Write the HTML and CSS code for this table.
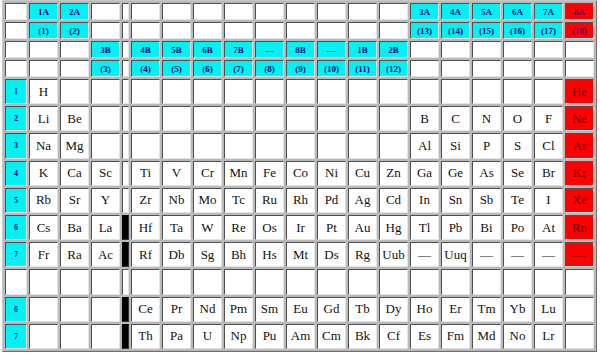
FILE: index.html
```html
<!DOCTYPE html>
<html>
<head>
<meta charset="utf-8">
<link rel="stylesheet" href="styles.css">
</head>
<body>
<table class="pt">
<colgroup>
<col class="wl"><col class="we"><col class="we"><col class="we"><col class="ws">
<col class="we"><col class="we"><col class="we"><col class="we"><col class="we"><col class="we"><col class="we"><col class="we"><col class="we">
<col class="we"><col class="we"><col class="we"><col class="we"><col class="we"><col class="we">
</colgroup>
<tr class="hr">
<td></td><td class="c g">1A</td><td class="c g">2A</td><td></td><td></td>
<td></td><td></td><td></td><td></td><td></td><td></td><td></td><td></td><td></td>
<td class="c g">3A</td><td class="c g">4A</td><td class="c g">5A</td><td class="c g">6A</td><td class="c g">7A</td><td class="r g">8A</td>
</tr>
<tr class="hr">
<td></td><td class="c g">(1)</td><td class="c g">(2)</td><td></td><td></td>
<td></td><td></td><td></td><td></td><td></td><td></td><td></td><td></td><td></td>
<td class="c g">(13)</td><td class="c g">(14)</td><td class="c g">(15)</td><td class="c g">(16)</td><td class="c g">(17)</td><td class="r g">(18)</td>
</tr>
<tr class="hr">
<td></td><td></td><td></td><td class="c g">3B</td><td></td>
<td class="c g">4B</td><td class="c g">5B</td><td class="c g">6B</td><td class="c g">7B</td><td class="c g">—</td><td class="c g">8B</td><td class="c g">—</td><td class="c g">1B</td><td class="c g">2B</td>
<td></td><td></td><td></td><td></td><td></td><td></td>
</tr>
<tr class="hr">
<td></td><td></td><td></td><td class="c g">(3)</td><td></td>
<td class="c g">(4)</td><td class="c g">(5)</td><td class="c g">(6)</td><td class="c g">(7)</td><td class="c g">(8)</td><td class="c g">(9)</td><td class="c g">(10)</td><td class="c g">(11)</td><td class="c g">(12)</td>
<td></td><td></td><td></td><td></td><td></td><td></td>
</tr>
<tr class="er">
<td class="c p">1</td><td>H</td><td></td><td></td><td></td>
<td></td><td></td><td></td><td></td><td></td><td></td><td></td><td></td><td></td>
<td></td><td></td><td></td><td></td><td></td><td class="r">He</td>
</tr>
<tr class="er">
<td class="c p">2</td><td>Li</td><td>Be</td><td></td><td></td>
<td></td><td></td><td></td><td></td><td></td><td></td><td></td><td></td><td></td>
<td>B</td><td>C</td><td>N</td><td>O</td><td>F</td><td class="r">Ne</td>
</tr>
<tr class="er">
<td class="c p">3</td><td>Na</td><td>Mg</td><td></td><td></td>
<td></td><td></td><td></td><td></td><td></td><td></td><td></td><td></td><td></td>
<td>Al</td><td>Si</td><td>P</td><td>S</td><td>Cl</td><td class="r">Ar</td>
</tr>
<tr class="er">
<td class="c p">4</td><td>K</td><td>Ca</td><td>Sc</td><td></td>
<td>Ti</td><td>V</td><td>Cr</td><td>Mn</td><td>Fe</td><td>Co</td><td>Ni</td><td>Cu</td><td>Zn</td>
<td>Ga</td><td>Ge</td><td>As</td><td>Se</td><td>Br</td><td class="r">Kr</td>
</tr>
<tr class="er">
<td class="c p">5</td><td>Rb</td><td>Sr</td><td>Y</td><td></td>
<td>Zr</td><td>Nb</td><td>Mo</td><td>Tc</td><td>Ru</td><td>Rh</td><td>Pd</td><td>Ag</td><td>Cd</td>
<td>In</td><td>Sn</td><td>Sb</td><td>Te</td><td>I</td><td class="r">Xe</td>
</tr>
<tr class="er">
<td class="c p">6</td><td>Cs</td><td>Ba</td><td>La</td><td class="k"></td>
<td>Hf</td><td>Ta</td><td>W</td><td>Re</td><td>Os</td><td>Ir</td><td>Pt</td><td>Au</td><td>Hg</td>
<td>Tl</td><td>Pb</td><td>Bi</td><td>Po</td><td>At</td><td class="r">Rn</td>
</tr>
<tr class="er">
<td class="c p">7</td><td>Fr</td><td>Ra</td><td>Ac</td><td class="k"></td>
<td>Rf</td><td>Db</td><td>Sg</td><td>Bh</td><td>Hs</td><td>Mt</td><td>Ds</td><td>Rg</td><td>Uub</td>
<td>—</td><td>Uuq</td><td>—</td><td>—</td><td>—</td><td class="r">—</td>
</tr>
<tr class="er">
<td></td><td></td><td></td><td></td><td></td>
<td></td><td></td><td></td><td></td><td></td><td></td><td></td><td></td><td></td>
<td></td><td></td><td></td><td></td><td></td><td></td>
</tr>
<tr class="er">
<td class="c p">6</td><td></td><td></td><td></td><td class="k"></td>
<td>Ce</td><td>Pr</td><td>Nd</td><td>Pm</td><td>Sm</td><td>Eu</td><td>Gd</td><td>Tb</td><td>Dy</td>
<td>Ho</td><td>Er</td><td>Tm</td><td>Yb</td><td>Lu</td><td></td>
</tr>
<tr class="er">
<td class="c p">7</td><td></td><td></td><td></td><td class="k"></td>
<td>Th</td><td>Pa</td><td>U</td><td>Np</td><td>Pu</td><td>Am</td><td>Cm</td><td>Bk</td><td>Cf</td>
<td>Es</td><td>Fm</td><td>Md</td><td>No</td><td>Lr</td><td></td>
</tr>
</table>
</body>
</html>
```

FILE: styles.css
```css
html, body {
  margin: 0;
  padding: 0;
  background: #ffffff;
}
body {
  padding: 0 0 0 2px;
  font-family: "Liberation Serif", "Times New Roman", serif;
}
.pt {
  table-layout: fixed;
  border-collapse: separate;
  border-spacing: 2px;
  border: 1px solid;
  border-color: #c8c8c8 #6e6e6e #6e6e6e #c8c8c8;
  background: #b9b9b9;
  width: 595px;
}
.wl { width: 22px; }
.we { width: 29px; }
.ws { width: 7px; }
.pt td {
  border: 1px solid;
  border-color: #505050 #e4e4e4 #e4e4e4 #505050;
  background: #ffffff;
  padding: 0;
  text-align: center;
  vertical-align: middle;
  font-size: 13px;
  color: #111111;
  overflow: hidden;
  white-space: nowrap;
}
.hr td { height: 15px; }
.er td { height: 23.2px; }
.pt td.c { background: #00f2f2; }
.pt td.r { background: #ff0000; color: #6a0000; }
.pt td.k { background: #000000; border-color: #000000 #303030 #303030 #000000; }
.pt td.g {
  font-size: 9px;
  font-weight: bold;
  color: #000080;
}
.pt td.r.g { color: #4a0060; }
.pt td.p {
  font-size: 8px;
  font-weight: bold;
  color: #000080;
}
```
